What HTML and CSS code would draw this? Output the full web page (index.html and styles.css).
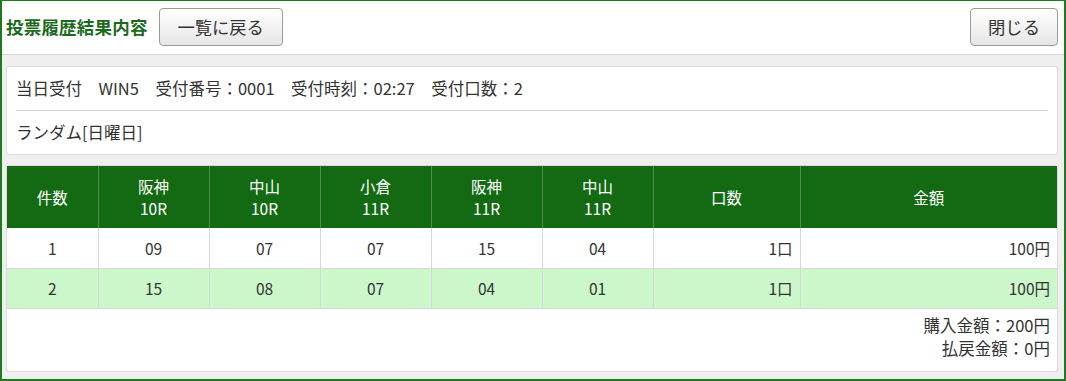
FILE: index.html
```html
<!DOCTYPE html>
<html lang="ja">
<head>
<meta charset="utf-8">
<title>投票履歴結果内容</title>
<link rel="stylesheet" href="styles.css">
</head>
<body>
<div class="frame">
  <header class="top">
    <h1 class="title">投票履歴結果内容</h1>
    <button class="btn back">一覧に戻る</button>
    <span class="spacer"></span>
    <button class="btn close">閉じる</button>
  </header>
  <main class="content">
    <section class="panel info">
      <div class="info-line">当日受付　WIN5　受付番号：0001　受付時刻：02:27　受付口数：2</div>
      <div class="info-line second">ランダム[日曜日]</div>
    </section>
    <section class="panel result">
      <table class="grid">
        <colgroup>
          <col class="c-no"><col class="c-r"><col class="c-r"><col class="c-r"><col class="c-r"><col class="c-r"><col class="c-kuchi"><col>
        </colgroup>
        <thead>
          <tr>
            <th>件数</th>
            <th>阪神<br>10R</th>
            <th>中山<br>10R</th>
            <th>小倉<br>11R</th>
            <th>阪神<br>11R</th>
            <th>中山<br>11R</th>
            <th>口数</th>
            <th>金額</th>
          </tr>
        </thead>
        <tbody>
          <tr>
            <td>1</td><td>09</td><td>07</td><td>07</td><td>15</td><td>04</td><td class="num">1口</td><td class="num">100円</td>
          </tr>
          <tr class="alt">
            <td>2</td><td>15</td><td>08</td><td>07</td><td>04</td><td>01</td><td class="num">1口</td><td class="num">100円</td>
          </tr>
        </tbody>
      </table>
      <div class="totals">
        <div>購入金額：200円</div>
        <div>払戻金額：0円</div>
      </div>
    </section>
  </main>
</div>
</body>
</html>
```

FILE: styles.css
```css
* { box-sizing: border-box; }
html, body { margin: 0; padding: 0; }
body {
  font-family: "Noto Sans CJK JP", "Noto Sans", sans-serif;
  color: #333;
  font-size: 16.5px;
}
.frame {
  width: 1066px;
  height: 381px;
  border: 2px solid #1f7a1f;
  border-top-width: 1px;
  background: #efefef;
  display: flex;
  flex-direction: column;
}
.top {
  height: 54px;
  background: #fff;
  border-bottom: 1px solid #d8d8d8;
  display: flex;
  align-items: center;
  padding: 0 6px 2px 4px;
}
.title {
  margin: 0;
  font-size: 17.5px;
  font-weight: bold;
  color: #1d6a1d;
  letter-spacing: 0.2px;
}
.spacer { flex: 1; }
.btn {
  height: 38px;
  font-family: inherit;
  font-size: 17.3px;
  color: #333;
  border: 1px solid #9a9a9a;
  border-radius: 4px;
  background: linear-gradient(#ffffff, #e6e6e6);
  padding: 0;
  cursor: pointer;
}
.back { margin-left: 11px; width: 124px; }
.close { width: 88px; }
.content {
  flex: 1;
  padding: 11px 6px 7px 4px;
  display: flex;
  flex-direction: column;
  gap: 10px;
}
.panel {
  background: #fff;
  border: 1px solid #dcdcdc;
  border-radius: 3px;
}
.info { padding: 0 9px; }
.info-line {
  height: 43px;
  line-height: 42px;
}
.info-line.second {
  border-top: 1px solid #d8d8d8;
  height: 44px;
  line-height: 42px;
}
.result {
  flex: 1;
  display: flex;
  flex-direction: column;
}
.grid {
  width: 100%;
  border-collapse: collapse;
  table-layout: fixed;
  font-size: 15.5px;
}
.c-no { width: 91px; }
.c-r { width: 111px; }
.c-kuchi { width: 147px; }
.grid th {
  background: #136a13;
  color: #fff;
  font-weight: normal;
  height: 62px;
  line-height: 22px;
  border-left: 1px solid #4a8f4a;
  text-align: center;
  padding: 0;
}
.grid th:first-child { border-left: none; }
.grid td {
  height: 40px;
  text-align: center;
  border-left: 1px solid #d8d8d8;
  border-bottom: 1px solid #d8d8d8;
  padding: 0 7px;
}
.grid td:first-child { border-left: none; }
.grid td.num { text-align: right; }
.grid tr.alt td { background: #cbf7cb; }
.totals {
  text-align: right;
  padding: 5px 7px 0 0;
  line-height: 23px;
}
```
